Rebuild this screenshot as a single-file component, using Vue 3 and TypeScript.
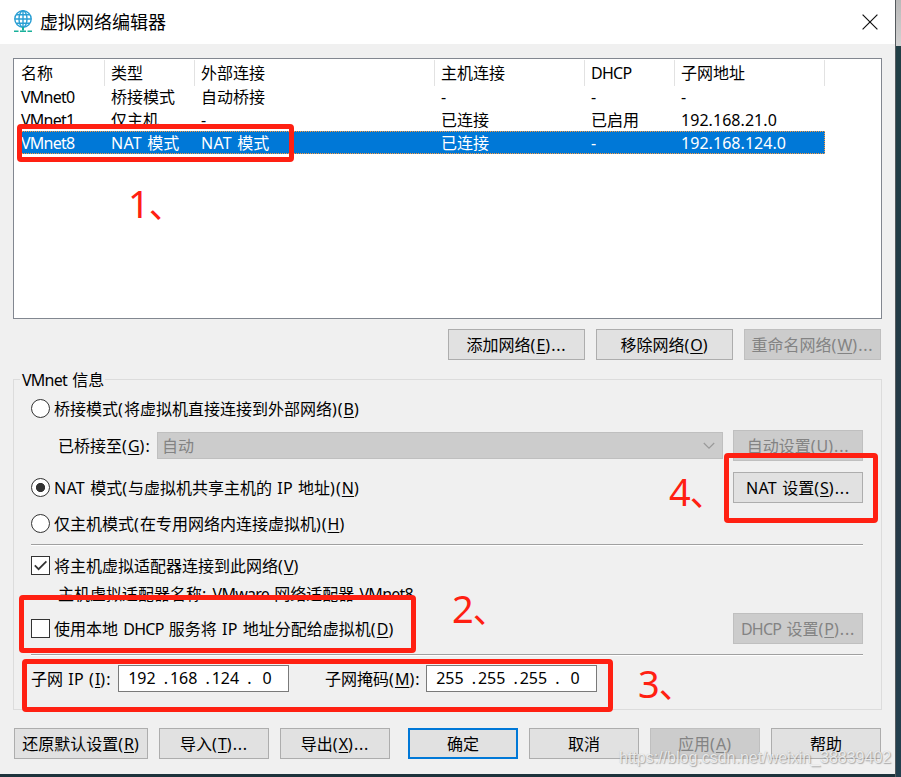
<script setup lang="ts">
import { h, type FunctionalComponent } from 'vue'

interface NetworkRow {
  cells: string[]
  selected?: boolean
}

/** Spacing class for a run of Latin characters. */
function runClass(run: string): string {
  if (/^[() :]+$/.test(run)) return 'caption-punct'
  if (/^\.+$/.test(run)) return 'caption-dots'
  if (/^[\d.\-]+$/.test(run)) return 'caption-num'
  if (/^[A-Z]{1,3}$/.test(run)) return 'caption-abbr'
  return 'caption-word'
}

/** Renders a caption; "&" marks the access key that follows it. */
const Caption: FunctionalComponent<{ text: string }> = ({ text }) => {
  const runs = text.match(/&.|[() :]+|[\d.\-]+(?![A-Za-z])|[A-Za-z]+\d*|[^\u0020-\u007e]+/g) ?? []
  return h(
    'span',
    { class: 'caption' },
    runs.map((run) => {
      if (run.startsWith('&')) return h('u', { class: 'caption-key' }, run.slice(1))
      if (/^[\u0020-\u007e]+$/.test(run)) return h('span', { class: runClass(run) }, run)
      return run
    }),
  )
}
Caption.props = ['text']

const columns = ['名称', '类型', '外部连接', '主机连接', 'DHCP', '子网地址']

const rows: NetworkRow[] = [
  { cells: ['VMnet0', '桥接模式', '自动桥接', '-', '-', '-'] },
  { cells: ['VMnet1', '仅主机', '-', '已连接', '已启用', '192.168.21.0'] },
  { cells: ['VMnet8', 'NAT 模式', 'NAT 模式', '已连接', '-', '192.168.124.0'], selected: true },
]

const subnetIp = ['192', '168', '124', '0']
const subnetMask = ['255', '255', '255', '0']

const marks = [1, 2, 3, 4]
</script>

<template>
  <div class="desktop">
    <div class="backdrop"></div>
    <div class="window">
      <header class="titlebar">
        <svg class="logo" width="20" height="23" viewBox="0 0 20 23" fill="none">
          <g stroke="#2a9fd4" stroke-width="1.4">
            <circle cx="10" cy="9" r="8.2" />
            <ellipse cx="10" cy="9" rx="4" ry="8.2" />
            <path d="M10 1v16M1.8 9h16.4M3.2 4.7h13.6M3.2 13.3h13.6" />
          </g>
          <path d="M10 17v3.5" stroke="#19b09a" stroke-width="2" />
          <path d="M1 21.2h4.5M7 21.2h6M14.5 21.2h4.5" stroke="#19b09a" stroke-width="1.4" />
        </svg>
        <h1 class="title">虚拟网络编辑器</h1>
        <svg class="close" width="16" height="16" viewBox="0 0 16 16">
          <path d="M.6.6l14.8 14.8M15.4.6L.6 15.4" stroke="#111" stroke-width="1.2" />
        </svg>
      </header>

      <main class="content">
        <section class="list">
          <div class="list-head">
            <div v-for="c in columns" :key="c" class="head-cell"><Caption :text="c" /></div>
          </div>
          <div v-for="(row, r) in rows" :key="r" class="list-row" :class="{ selected: row.selected }">
            <div v-for="(cell, i) in row.cells" :key="i" class="cell"><Caption :text="cell" /></div>
          </div>
        </section>

        <div class="list-actions">
          <button class="btn"><Caption text="添加网络(&E)..." /></button>
          <button class="btn"><Caption text="移除网络(&O)" /></button>
          <button class="btn" disabled><Caption text="重命名网络(&W)..." /></button>
        </div>

        <section class="group">
          <div class="legend"><Caption text="VMnet 信息" /></div>

          <div class="row row-bridge">
            <span class="radio"></span>
            <Caption text="桥接模式(将虚拟机直接连接到外部网络)(&B)" />
          </div>
          <div class="row row-select">
            <div class="select-label"><Caption text="已桥接至(&G):" /></div>
            <div class="select">
              <Caption text="自动" />
              <svg width="12" height="8" viewBox="0 0 12 8" fill="none">
                <path d="M.8 1l5.2 5.2L11.2 1" stroke="#9a9a9a" stroke-width="1.2" />
              </svg>
            </div>
            <button class="btn side" disabled><Caption text="自动设置(&U)..." /></button>
          </div>
          <div class="row row-nat">
            <span class="radio checked"></span>
            <Caption text="NAT 模式(与虚拟机共享主机的 IP 地址)(&N)" />
            <button class="btn side push"><Caption text="NAT 设置(&S)..." /></button>
          </div>
          <div class="row row-host">
            <span class="radio"></span>
            <Caption text="仅主机模式(在专用网络内连接虚拟机)(&H)" />
          </div>

          <div class="rule"></div>

          <div class="row row-adapter">
            <span class="check">
              <svg width="17" height="17" viewBox="0 0 17 17" fill="none">
                <path d="M2.8 8.3l3.8 3.9 7.8-7.8" stroke="#333" stroke-width="1.7" />
              </svg>
            </span>
            <Caption text="将主机虚拟适配器连接到此网络(&V)" />
          </div>
          <div class="row row-name">
            <Caption text="主机虚拟适配器名称: VMware 网络适配器 VMnet8" />
          </div>
          <div class="row row-dhcp">
            <span class="check"></span>
            <Caption text="使用本地 DHCP 服务将 IP 地址分配给虚拟机(&D)" />
            <button class="btn side push" disabled><Caption text="DHCP 设置(&P)..." /></button>
          </div>

          <div class="rule rule-low"></div>

          <div class="row row-subnet">
            <div class="ip-label"><Caption text="子网 IP (&I):" /></div>
            <div class="ip-box">
              <span v-for="(o, i) in subnetIp" :key="i" class="octet" :class="{ dotted: i > 0 }">{{ o }}</span>
            </div>
            <div class="mask-label"><Caption text="子网掩码(&M):" /></div>
            <div class="ip-box">
              <span v-for="(o, i) in subnetMask" :key="i" class="octet" :class="{ dotted: i > 0 }">{{ o }}</span>
            </div>
          </div>
        </section>

        <footer class="footer">
          <button class="btn reset"><Caption text="还原默认设置(&R)" /></button>
          <button class="btn"><Caption text="导入(&T)..." /></button>
          <button class="btn"><Caption text="导出(&X)..." /></button>
          <button class="btn primary"><Caption text="确定" /></button>
          <button class="btn"><Caption text="取消" /></button>
          <button class="btn" disabled><Caption text="应用(&A)" /></button>
          <button class="btn"><Caption text="帮助" /></button>
        </footer>
      </main>
    </div>

    <template v-for="n in marks" :key="n">
      <div class="frame" :class="`frame-${n}`"></div>
      <div class="mark" :class="`mark-${n}`">{{ n }}<span class="mark-comma">、</span></div>
    </template>
    <div class="watermark">https://blog.csdn.net/weixin_38839402</div>
  </div>
</template>

<style>
body {
  margin: 0;
}
.caption {
  white-space: pre;
}
.caption-word {
  letter-spacing: -0.75px;
}
.caption-abbr {
  letter-spacing: 0.25px;
}
.caption-punct {
  letter-spacing: 1.05px;
}
.caption-dots {
  letter-spacing: 0.8px;
}
.caption-num {
  letter-spacing: 0.05px;
}
.caption-key {
  text-decoration-thickness: 1px;
  text-underline-offset: 2px;
}
</style>

<style scoped>
.desktop {
  position: relative;
  width: 901px;
  height: 777px;
  overflow: hidden;
  background: #1d333c;
  font: 16px/20px 'Noto Sans', 'Noto Sans CJK SC', sans-serif;
  color: #000;
}
.backdrop {
  position: absolute;
  top: 0;
  right: 0;
  width: 6px;
  height: 777px;
  background: linear-gradient(#b9b9b9, #d2d2d2 46px, #213f46 46px, #223b46 300px, #263947 500px, #23404f);
  box-shadow: inset 1px 0 0 #555a5e;
}
.window {
  position: relative;
  width: 895px;
  height: 774px;
  background: #f0f0f0;
}
.titlebar {
  display: flex;
  align-items: center;
  height: 44px;
  padding: 0 17px 0 13px;
  box-sizing: border-box;
  background: #fff;
}
.logo {
  margin-top: -2px;
}
.title {
  margin: -2px auto 0 7px;
  font: 400 18px/24px 'Noto Sans CJK SC', sans-serif;
}
.close {
  margin-top: -1px;
}
.content {
  padding: 14px 13px 0;
}
.list {
  height: 261px;
  box-sizing: border-box;
  border: 1px solid #828790;
  background: #fff;
}
.list-head,
.list-row {
  display: grid;
  grid-template-columns: 84px 90px 240px 150px 90px 150px;
  width: 804px;
  margin-left: 7px;
}
.list-head {
  height: 25px;
  margin-top: 1px;
}
.head-cell {
  border-right: 1px solid #e2e2e2;
  line-height: 26px;
}
.list-row {
  height: 23px;
}
.cell {
  line-height: 24px;
}
.head-cell:not(:first-child),
.cell:not(:first-child) {
  padding-left: 6px;
}
.selected {
  background: #0078d7;
  color: #fff;
  outline: 1px dotted #ff9a3c;
  outline-offset: -1px;
}
.list-actions {
  display: grid;
  grid-template-columns: repeat(3, 137px);
  justify-content: end;
  gap: 11px;
  margin-top: 10px;
  padding-right: 1px;
}
.btn {
  display: flex;
  align-items: center;
  justify-content: center;
  height: 31px;
  padding: 1px 0 0;
  box-sizing: border-box;
  border: 1px solid #adadad;
  background: #e1e1e1;
  font: inherit;
  color: #000;
}
.btn:disabled {
  border-color: #bfbfbf;
  background: #ccc;
  color: #838383;
}
.group {
  height: 331px;
  margin-top: 19px;
  padding: 0 18px 0 17px;
  box-sizing: border-box;
  border: 1px solid #dcdcdc;
}
.legend {
  width: 81px;
  height: 24px;
  margin: -12px 0 1px -11px;
  padding: 0 2px;
  background: #f0f0f0;
  line-height: 24px;
}
.row {
  display: flex;
  align-items: center;
  height: 31px;
}
.row-bridge,
.row-host,
.row-adapter {
  height: 32px;
}
.row-select,
.row-host {
  margin-top: 5px;
}
.row-nat {
  margin-top: 11px;
}
.row-adapter {
  margin-top: 4px;
}
.row-name {
  height: 24px;
  padding-left: 27px;
}
.row-dhcp {
  margin-top: 7px;
}
.row-subnet {
  height: 27px;
  margin-top: 9px;
}
.radio,
.check {
  width: 19px;
  height: 19px;
  margin-right: 4px;
  box-sizing: border-box;
  border: 1px solid #333;
  background: #fff;
}
.row-bridge .radio,
.row-host .radio,
.row-adapter .check {
  margin-top: -1px;
}
.radio {
  border-radius: 50%;
}
.radio.checked {
  background: radial-gradient(circle, #333 4.2px, #fff 5px);
}
.check svg {
  display: block;
}
.select-label,
.ip-label,
.mask-label {
  box-sizing: border-box;
}
.select-label {
  width: 126px;
  padding-left: 27px;
}
.select {
  display: flex;
  align-items: center;
  justify-content: space-between;
  width: 566px;
  height: 27px;
  padding: 0 7px 0 4px;
  box-sizing: border-box;
  border: 1px solid #bfbfbf;
  background: #ccc;
  color: #838383;
}
.side {
  width: 130px;
  margin-left: 10px;
}
.push {
  margin-left: auto;
}
.rule {
  height: 1px;
  margin-top: 4px;
  border-bottom: 1px solid #fff;
  background: #a0a0a0;
}
.rule-low {
  margin-top: 10px;
}
.ip-label {
  width: 87px;
}
.mask-label {
  width: 101px;
  margin-left: 36px;
}
.ip-box {
  display: flex;
  width: 171px;
  height: 27px;
  padding-left: 2px;
  box-sizing: border-box;
  border: 1px solid #7a7a7a;
  background: #fff;
  line-height: 25px;
}
.octet {
  width: 42px;
  text-align: center;
}
.dotted::before {
  content: '.';
  float: left;
  width: 0;
  text-indent: 1px;
}
.footer {
  display: grid;
  grid-template-columns: 134px 110px 110px 110px 110px 110px 110px;
  column-gap: 11px;
  margin-top: 18px;
  padding-left: 1px;
}
.footer .primary {
  border: 2px solid #0078d7;
}
.footer .primary,
.footer .primary ~ .btn {
  position: relative;
  left: 7px;
}
.frame {
  position: absolute;
  box-sizing: border-box;
  border: 5px solid #ff2012;
  border-radius: 4px;
}
.frame-1 {
  left: 17px;
  top: 124px;
  width: 277px;
  height: 38px;
}
.frame-2 {
  left: 19px;
  top: 595px;
  width: 397px;
  height: 58px;
}
.frame-3 {
  left: 22px;
  top: 659px;
  width: 591px;
  height: 53px;
}
.frame-4 {
  left: 724px;
  top: 453px;
  width: 154px;
  height: 70px;
}
.mark {
  position: absolute;
  color: #ff2012;
  font-size: 38px;
  line-height: 40px;
}
.mark-comma {
  margin-left: -1px;
  font-size: 35px;
}
.mark-1 {
  left: 128px;
  top: 183px;
}
.mark-2 {
  left: 452px;
  top: 588px;
}
.mark-3 {
  left: 638px;
  top: 663px;
}
.mark-4 {
  left: 669px;
  top: 471px;
}
.watermark {
  position: absolute;
  left: 619px;
  top: 748px;
  color: rgba(255, 255, 255, 0.75);
  font: 16px/20px 'Liberation Sans', sans-serif;
  text-shadow: 1px 1px 1px rgba(110, 110, 110, 0.5), 0 0 1px rgba(110, 110, 110, 0.4);
  white-space: nowrap;
}
</style>
